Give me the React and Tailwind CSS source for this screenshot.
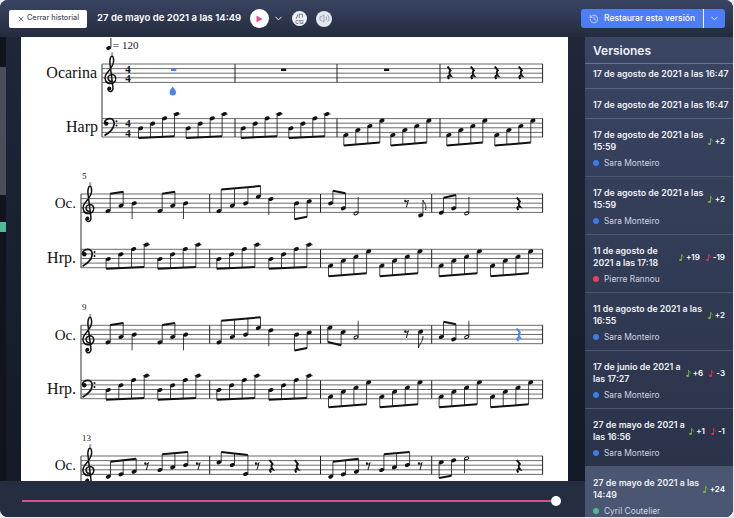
import React from "react";
import { X, ChevronDown, History, Volume2 } from "lucide-react";

const versions = [
  { date: "17 de agosto de 2021 a las 16:47", h: "h-[25px]", pt: "pt-[4px]" },
  { date: "17 de agosto de 2021 a las 16:47", h: "h-[30px]", pt: "pt-[10px]" },
  { date: "17 de agosto de 2021 a las\n15:59", name: "Sara Monteiro", dot: "bg-[#3b7de8]", plus: "+2" },
  { date: "17 de agosto de 2021 a las\n15:59", name: "Sara Monteiro", dot: "bg-[#3b7de8]", plus: "+2" },
  { date: "11 de agosto de\n2021 a las 17:18", name: "Pierre Rannou", dot: "bg-[#e8405f]", plus: "+19", minus: "-19" },
  { date: "11 de agosto de 2021 a las\n16:55", name: "Sara Monteiro", dot: "bg-[#3b7de8]", plus: "+2" },
  { date: "17 de junio de 2021 a\nlas 17:27", name: "Sara Monteiro", dot: "bg-[#3b7de8]", plus: "+6", minus: "-3" },
  { date: "27 de mayo de 2021 a\nlas 16:56", name: "Sara Monteiro", dot: "bg-[#3b7de8]", plus: "+1", minus: "-1" },
  { date: "27 de mayo de 2021 a las\n14:49", name: "Cyril Coutelier", dot: "bg-[#4fb98f]", plus: "+24", active: true },
];

const INK = "#111";
const BLUE = "#4d85f5";

const NoteIcon = ({ color }) => (
  <svg width="5" height="9" viewBox="0 0 6 9" className="shrink-0">
    <ellipse cx="1.8" cy="7.4" rx="1.7" ry="1.3" fill={color} />
    <path d="M3.1 7.2V.6C3.4 2 5.4 2.4 5.2 4.4" fill="none" stroke={color} strokeWidth="1" />
  </svg>
);

const Head = ({ x, y, color = INK }) => (
  <ellipse cx={x} cy={y} rx="2.6" ry="1.9" fill={color} transform={`rotate(-20 ${x} ${y})`} />
);

const Open = ({ x, y }) => (
  <ellipse cx={x} cy={y} rx="2.1" ry="1.4" fill="none" stroke={INK} strokeWidth="1" transform={`rotate(-20 ${x} ${y})`} />
);

// quarter or half note with a free stem
const Stem = ({ x, y, to, half }) => {
  const sx = to < y ? x + 2.2 : x - 2.2;
  return (
    <>
      {half ? <Open x={x} y={y} /> : <Head x={x} y={y} />}
      <line x1={sx} y1={y} x2={sx} y2={to} stroke={INK} strokeWidth="0.8" />
    </>
  );
};

// beamed notes, beam given by its two ends
const Beam = ({ notes, b }) => {
  const [x1, y1, x2, y2] = b;
  const at = (x) => y1 + ((y2 - y1) * (x - x1)) / (x2 - x1);
  const up = at(notes[0][0]) < notes[0][1];
  return (
    <>
      {notes.map(([x, y]) => {
        const sx = up ? x + 2.2 : x - 2.2;
        return (
          <React.Fragment key={x}>
            <Head x={x} y={y} />
            <line x1={sx} y1={y} x2={sx} y2={at(sx)} stroke={INK} strokeWidth="0.8" />
          </React.Fragment>
        );
      })}
      <line x1={x1} y1={y1} x2={x2} y2={y2} stroke={INK} strokeWidth="2" />
    </>
  );
};

const QuarterRest = ({ x, y, color = INK }) => (
  <path
    d={`M${x - 1.2} ${y - 6.5}L${x + 1.8} ${y - 2.5}C${x + 0.3} ${y - 1} ${x} ${y} ${x + 2} ${y + 2.8}C${x} ${y + 2.2} ${x - 1.8} ${y + 3} ${x + 0.4} ${y + 6}`}
    fill="none"
    stroke={color}
    strokeWidth="2"
  />
);

const EighthRest = ({ x, y }) => (
  <>
    <circle cx={x - 1.4} cy={y - 2.6} r="1.1" fill={INK} />
    <path d={`M${x - 2} ${y - 1.8}C${x - 0.5} ${y - 1.4} ${x + 1} ${y - 2} ${x + 1.7} ${y - 3.4}L${x - 0.4} ${y + 4}`} fill="none" stroke={INK} strokeWidth="1" />
  </>
);

const Treble = ({ x, top }) => (
  <g transform={`translate(${x} ${top})`}>
    <path
      d="M1.5 17.5C-1.5 18-3.5 15.5-2.8 13C-2 10.5 2 9.5 4 12C6 15 4 19.5-.5 19.5C-5 19.5-7 15.5-5.5 11.5C-4 7.5 1.5 4.5 2.5-2C3-5 2-8 1-8C-.5-8-1.5-4-1 0L2 24C2.3 27-.5 28-2 27C-3.5 26-3 23.5-1.5 23.5"
      fill="none"
      stroke={INK}
      strokeWidth="1.5"
    />
    <circle cx="-1.6" cy="24.4" r="1.9" fill={INK} />
    <text x="1" y="-8.6" fontSize="4.5" fontFamily="Liberation Serif, serif" textAnchor="middle" fill={INK}>8</text>
  </g>
);

const Bass = ({ x, top }) => (
  <g transform={`translate(${x} ${top})`}>
    <circle cx="1.8" cy="5" r="2.2" fill={INK} />
    <path d="M0 4.6C0 1.2 3 0 5.4 0C8.8 0 10 3 9.5 6C9 10.5 5 14 0 17" fill="none" stroke={INK} strokeWidth="1.7" />
    <circle cx="12" cy="2.6" r="1" fill={INK} />
    <circle cx="12" cy="6.8" r="1" fill={INK} />
  </g>
);

const Staff = ({ x1, top, bars }) => (
  <>
    {[0, 1, 2, 3, 4].map((i) => (
      <line key={i} x1={x1} x2="543" y1={top + i * 4.6} y2={top + i * 4.6} stroke="#5a5a5a" strokeWidth="0.9" />
    ))}
    {bars.map((b) => (
      <line key={b} x1={b} x2={b} y1={top} y2={top + 18.4} stroke="#222" strokeWidth="1" />
    ))}
  </>
);

const Time = ({ x, top }) => (
  <text fontFamily="Liberation Serif, serif" fontWeight="700" fontSize="11" textAnchor="middle" fill={INK}>
    <tspan x={x} y={top + 8.6}>4</tspan>
    <tspan x={x} y={top + 18}>4</tspan>
  </text>
);

const Label = ({ x, y, size = 16, children }) => (
  <text x={x} y={y} textAnchor="end" fontFamily="Liberation Serif, serif" fontSize={size} fill="#111">{children}</text>
);

// harp figures, both run over four eighths at a 12.7px step
const HarpHigh = ({ x, top, step = 12.7 }) => (
  <>
    <line x1={x + step * 3 - 3.6} x2={x + step * 3 + 3.6} y1={top - 4.6} y2={top - 4.6} stroke="#222" strokeWidth="0.8" />
    <Beam
      notes={[[x, top + 9.7], [x + step, top + 5], [x + step * 2, top - 0.3], [x + step * 3, top - 4.6]]}
      b={[x - 2.2, top + 19.4, x + step * 3 - 2.2, top + 17.6]}
    />
  </>
);

const HarpLow = ({ x, top, step = 12.7 }) => (
  <Beam
    notes={[[x, top + 16.4], [x + step, top + 11.4], [x + step * 2, top + 7.4], [x + step * 3, top + 2]]}
    b={[x - 2.2, top + 27, x + step * 3 - 2.2, top + 24]}
  />
);

const bars = [209.7, 320.5, 431.7, 542.6];

const Harp = ({ top }) => (
  <>
    <Staff x1={81} top={top} bars={bars} />
    <Bass x={82.5} top={top} />
    {[108.3, 160, 219, 271].map((x) => (
      <HarpHigh key={x} x={x} top={top} />
    ))}
    {[330.7, 382, 441.3, 492.7].map((x) => (
      <HarpLow key={x} x={x} top={top} />
    ))}
  </>
);

// first two bars of the ocarina line, same in systems 5 and 9
const OcarinaOpening = ({ top }) => (
  <>
    <Beam notes={[[108, top + 17], [121, top + 11.7]]} b={[110.2, top - 0.3, 123.5, top - 2.3]} />
    <Stem x={134.3} y={top + 9.3} to={top + 25} />
    <Beam notes={[[160, top + 17], [172.7, top + 11.7]]} b={[162.2, top - 0.3, 175, top - 2.3]} />
    <Stem x={185.7} y={top + 9.3} to={top + 25} />
    <Beam
      notes={[[219, top + 17], [232.3, top + 11.7], [245.7, top + 9.3], [258.3, top + 2.7]]}
      b={[221.2, top - 4.6, 260.6, top - 8]}
    />
    <Stem x={271} y={top + 5} to={top + 21} />
    <Beam notes={[[296.7, top + 9.3], [309.3, top + 7.3]]} b={[294.5, top + 25.3, 307.1, top + 22.7]} />
  </>
);

const Score = () => (
  <svg width="547" height="444" viewBox="21 37 547 444" className="block">
    {/* tempo */}
    <ellipse cx="108.6" cy="48" rx="2.5" ry="1.9" fill={INK} transform="rotate(-20 108.6 48)" />
    <line x1="110.9" y1="47.5" x2="110.9" y2="38" stroke={INK} strokeWidth="0.9" />
    <text x="113" y="49" fontFamily="Liberation Serif, serif" fontSize="11" fill="#222">= 120</text>

    {/* system 1 */}
    <line x1="102" x2="102" y1="64" y2="137" stroke="#333" strokeWidth="1" />
    <Staff x1={102} top={64} bars={[235, 337, 440, 542.6]} />
    <Staff x1={102} top={118.6} bars={[235, 337, 440, 542.6]} />
    <Label x={97} y={78}>Ocarina</Label>
    <Label x={98} y={132}>Harp</Label>
    <Treble x={111} top={64} />
    <Bass x={104.5} top={118.6} />
    <Time x={128} top={64} />
    <Time x={128} top={118.6} />
    <rect x="171" y="68.7" width="5.2" height="2.3" fill={BLUE} />
    <rect x="281" y="68.7" width="5.2" height="2.3" fill={INK} />
    <rect x="384" y="68.7" width="5.2" height="2.3" fill={INK} />
    <path d="M172.8 86.5C174 88.5 176 90 176 92.2A3.2 3.2 0 0 1 169.6 92.2C169.6 90 171.6 88.5 172.8 86.5Z" fill={BLUE} />
    {[448.7, 472, 496, 520].map((x) => (
      <QuarterRest key={x} x={x} y={73} />
    ))}
    {[140.7, 188.3, 243.3, 291].map((x) => (
      <HarpHigh key={x} x={x} top={118.6} step={12} />
    ))}
    {[346, 393, 449, 497].map((x) => (
      <HarpLow key={x} x={x} top={118.6} step={12} />
    ))}

    {/* system 2 */}
    <text x="82" y="179" fontFamily="Liberation Serif, serif" fontSize="9" fill="#222">5</text>
    <line x1="81" x2="81" y1="194" y2="268" stroke="#333" strokeWidth="1" />
    <Staff x1={81} top={194} bars={bars} />
    <Label x={76} y={208} size={15}>Oc.</Label>
    <Label x={76} y={263}>Hrp.</Label>
    <Treble x={89} top={194} />
    <OcarinaOpening top={194} />
    <Beam notes={[[330.7, 203.3], [343.3, 208.3]]} b={[332.9, 190.7, 345.5, 193.3]} />
    <Stem x={356} y={213.3} to={197} half />
    <EighthRest x={406.7} y={203.5} />
    <Stem x={420.7} y={215.3} to={200} />
    <path d="M422.9 200C424 203 427 205 425.5 210" fill="none" stroke={INK} strokeWidth="0.9" />
    <Beam notes={[[441.3, 212.7], [453.7, 208.3]]} b={[443.5, 197.7, 456, 195]} />
    <Stem x={466.7} y={213.3} to={197} half />
    <QuarterRest x={518} y={204} />
    <Harp top={249.3} />

    {/* system 3 */}
    <text x="82" y="310" fontFamily="Liberation Serif, serif" fontSize="9" fill="#222">9</text>
    <line x1="81" x2="81" y1="325" y2="399" stroke="#333" strokeWidth="1" />
    <Staff x1={81} top={325.3} bars={bars} />
    <Label x={76} y={340} size={15}>Oc.</Label>
    <Label x={76} y={394}>Hrp.</Label>
    <Treble x={89} top={325.3} />
    <OcarinaOpening top={325.3} />
    <Beam notes={[[330, 327.7], [343.3, 332]]} b={[327.8, 342, 341.1, 345.3]} />
    <Stem x={356} y={337.3} to={320.7} half />
    <EighthRest x={406.7} y={334} />
    <Stem x={420.7} y={331.7} to={348} />
    <path d="M418.5 348C419 344 423 342 423 336" fill="none" stroke={INK} strokeWidth="0.9" />
    <Beam notes={[[441.3, 337], [453.7, 339.3]]} b={[443.5, 321.7, 456, 324.3]} />
    <Stem x={466.7} y={337} to={320.7} half />
    <QuarterRest x={518} y={335} color={BLUE} />
    <Harp top={380.3} />

    {/* system 4, cut off by the slider bar */}
    <text x="82" y="441" fontFamily="Liberation Serif, serif" fontSize="9" fill="#222">13</text>
    <line x1="81" x2="81" y1="456" y2="481" stroke="#333" strokeWidth="1" />
    <Staff x1={81} top={456} bars={bars} />
    <Label x={76} y={470} size={15}>Oc.</Label>
    <Treble x={89} top={456} />
    {[108.3, 330.7].map((x) => (
      <Beam key={x} notes={[[x, 476.7], [x + 12.7, 474.3], [x + 25.7, 471.7]]} b={[x + 2.2, 461.7, x + 27.9, 458.7]} />
    ))}
    {[160, 381.7].map((x) => (
      <Beam key={x} notes={[[x, 470], [x + 12.7, 467.3], [x + 25.7, 465]]} b={[x + 2.2, 454.3, x + 27.9, 452]} />
    ))}
    {[146.7, 198.3, 257.3, 368.3, 420.3].map((x) => (
      <EighthRest key={x} x={x} y={466} />
    ))}
    <Beam notes={[[219, 462.3], [232.3, 465], [245.7, 474]]} b={[221.2, 452, 247.9, 455]} />
    {[270.7, 296, 518].map((x) => (
      <QuarterRest key={x} x={x} y={466.5} />
    ))}
    <Beam notes={[[441.3, 462.3], [453.7, 460.3]]} b={[439.1, 478, 451.5, 475.7]} />
    <Stem x={466.7} y={458.3} to={473.3} half />
  </svg>
);

const VersionRow = ({ v }) => {
  if (!v.name) {
    return (
      <div className={`${v.h} ${v.pt} pl-2 border-b border-[#59627c] text-[8.8px] leading-[12px] font-semibold text-[#eef0f5] whitespace-nowrap`}>
        {v.date}
      </div>
    );
  }
  return (
    <div className={`h-[58px] pt-[10px] pl-2 pr-2 border-b border-[#4d566f] ${v.active ? "bg-[#4a5672]" : ""}`}>
      <div className="flex items-center justify-between">
        <div className="text-[8.8px] leading-[12px] font-semibold text-[#eef0f5] whitespace-pre">{v.date}</div>
        <div className="flex items-center gap-[6px] text-[8px] font-semibold text-white">
          <span className="flex items-center gap-[2px]">
            <NoteIcon color="#7fb637" />
            {v.plus}
          </span>
          {v.minus && (
            <span className="flex items-center gap-[2px]">
              <NoteIcon color="#e5344c" />
              {v.minus}
            </span>
          )}
        </div>
      </div>
      <div className="mt-[4px] flex items-center gap-[5px] text-[8.4px] leading-[12px] text-[#cfd4e0]">
        <span className={`w-[6px] h-[6px] shrink-0 rounded-full ${v.dot}`} />
        {v.name}
      </div>
    </div>
  );
};

export default function App() {
  return (
    <div className="w-[734px] h-[518px] bg-[#e9eaee] font-['Inter',sans-serif]">
      <div className="w-[733px] h-[517px] rounded-[8px] overflow-hidden flex flex-col bg-[#1c2334]">
        {/* top bar */}
        <header className="h-[37px] shrink-0 flex items-center pl-[9px] pr-[8px] bg-gradient-to-b from-[#3a4563] to-[#232b3e]">
          <button className="h-[18px] w-[78px] rounded-[2px] bg-white flex items-center justify-center gap-[2px] text-[7.3px] font-medium text-[#4b5160]">
            <X size={8} strokeWidth={2.5} />
            Cerrar historial
          </button>
          <div className="ml-[10px] w-[144px] text-[9.6px] font-semibold text-white whitespace-nowrap">27 de mayo de 2021 a las 14:49</div>
          <div className="ml-[9px] w-[19px] h-[19px] rounded-full bg-white flex items-center justify-center">
            <svg width="7" height="8" viewBox="0 0 7 8"><path d="M.5.5L6.5 4L.5 7.5Z" fill="#e0518f" /></svg>
          </div>
          <ChevronDown size={11} className="ml-[4px] text-white" />
          <div className="ml-[8px] w-[15px] h-[15px] rounded-full bg-[#eef0f4] flex items-center justify-center">
            <svg width="11" height="12" viewBox="0 0 11 12" fill="none" stroke="#5c6478" strokeWidth="0.8">
              <path d="M2 6L4 1.2M5.2 1.2V5.2M5.2 1.2H8.4V4.6" />
              <text x="5.5" y="10.6" fontSize="4.6" fontWeight="700" textAnchor="middle" fill="#5c6478" stroke="none" fontFamily="Inter, sans-serif">C12</text>
            </svg>
          </div>
          <div className="ml-[9px] w-[16px] h-[16px] rounded-full bg-[#e4e7ee] flex items-center justify-center">
            <Volume2 size={11} strokeWidth={1.5} className="text-[#7b8397]" />
          </div>
          <div className="ml-auto h-[19px] w-[144px] rounded-[3px] bg-[#4d7ef7] flex items-center text-white">
            <div className="flex-1 flex items-center pl-[8px] gap-[5px] text-[8.5px] font-medium whitespace-nowrap">
              <History size={10} className="text-[#cfdcff]" />
              Restaurar esta versión
            </div>
            <div className="w-px h-full bg-white" />
            <div className="w-[21px] flex justify-center">
              <ChevronDown size={11} />
            </div>
          </div>
        </header>

        <div className="flex-1 min-h-0 flex">
          {/* score + slider */}
          <div className="flex-1 min-w-0 flex flex-col">
            <div className="flex-1 min-h-0 flex">
              <div className="w-[21px] shrink-0 flex bg-gradient-to-b from-[#1e2638] to-[#141a27]">
                <div className="w-[6px] pt-[30px] bg-[#10141d] flex flex-col">
                  <div className="h-[128px] bg-[#4a4e59]" />
                  <div className="h-[10px] mt-[27px] bg-[#4fb99a]" />
                </div>
              </div>
              <main className="w-[547px] shrink-0 bg-white overflow-hidden">
                <Score />
              </main>
              <div className="flex-1 bg-gradient-to-b from-[#1f2739] to-[#131926]" />
            </div>
            <div className="h-[36px] shrink-0 pt-[3px] bg-[#252d40] flex items-center pl-[22px] pr-[29px]">
              <div className="relative flex-1 h-[2px] bg-[#d94f91]">
                <div className="absolute right-[-5px] top-[-4px] w-[10px] h-[10px] rounded-full bg-white" />
              </div>
            </div>
          </div>

          {/* versions list */}
          <aside className="w-[148px] shrink-0 overflow-hidden bg-gradient-to-b from-[#3a4563] to-[#293146]">
            <div className="h-[27px] pt-[1px] flex items-center pl-2 border-b border-[#6a7390] text-[12px] font-semibold text-[#eef0f5]">Versiones</div>
            {versions.map((v, i) => (
              <VersionRow key={i} v={v} />
            ))}
          </aside>
        </div>
      </div>
    </div>
  );
}
